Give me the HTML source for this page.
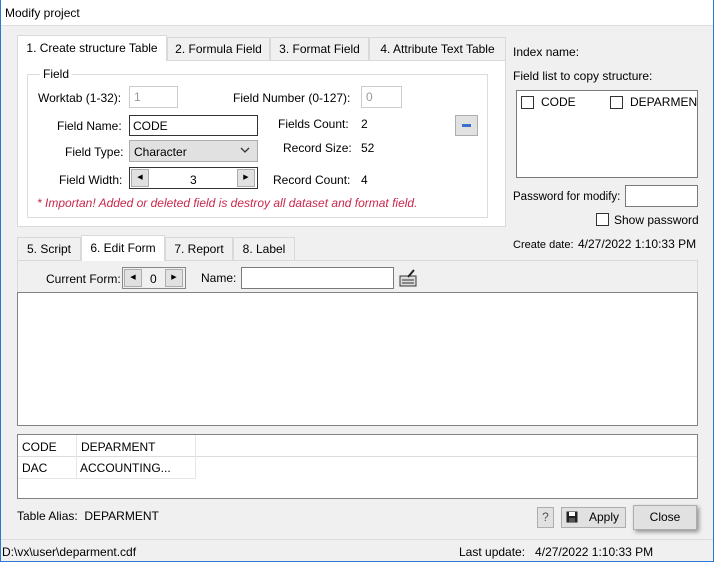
<!DOCTYPE html>
<html><head><style>
*{box-sizing:border-box;margin:0;padding:0}
body{width:714px;height:562px;position:relative;background:#f0f0f0;font-family:"Liberation Sans",sans-serif;font-size:12px;color:#000;overflow:hidden}
.a{position:absolute;white-space:nowrap}
.box{position:absolute;background:#fff;border:1px solid #7a7a7a}
.btn{position:absolute;background:#e1e1e1;border:1px solid #adadad}
.cb{position:absolute;width:13px;height:13px;border:1px solid #333;background:#fff}
.tab{position:absolute;border:1px solid #d9d9d9;border-bottom:none;background:#f0f0f0;text-align:center;line-height:24px}
.sp{position:absolute;width:18px;height:18px;background:#e1e1e1;border:1px solid #adadad;font-size:7px;text-align:center;line-height:16px}
</style></head><body>
<div class="a" style="left:0;top:0;width:714px;height:26px;background:#fff;border-bottom:1px solid #dcdcdc"></div>
<div class="a" style="left:5px;top:6px">Modify project</div>
<div class="a" style="left:0;top:0;width:1px;height:562px;background:#2b78d0"></div>
<div class="a" style="left:713px;top:0;width:1px;height:562px;background:#2b78d0"></div>

<!-- top tabs -->
<div class="a" style="left:17px;top:60px;width:489px;height:167px;background:#fff;border:1px solid #d9d9d9"></div>
<div class="tab" style="left:17px;top:35px;width:150px;height:26px;background:#fff;border-color:#d9d9d9">1. Create structure Table</div>
<div class="tab" style="left:167px;top:37px;width:103px;height:23px;line-height:22px">2. Formula Field</div>
<div class="tab" style="left:270px;top:37px;width:99px;height:23px;line-height:22px">3. Format Field</div>
<div class="tab" style="left:369px;top:37px;width:137px;height:23px;line-height:22px">4. Attribute Text Table</div>
<div class="a" style="left:27px;top:74px;width:461px;height:144px;border:1px solid #dcdcdc"></div>
<div class="a" style="left:40px;top:67px;background:#fff;padding:0 3px">Field</div>
<div class="a" style="left:38px;top:91px">Worktab (1-32):</div>
<div class="box" style="left:129px;top:86px;width:49px;height:22px;border-color:#ccc;color:#999;padding:3px 4px">1</div>
<div class="a" style="left:233px;top:91px">Field Number (0-127):</div>
<div class="box" style="left:361px;top:86px;width:41px;height:22px;border-color:#ccc;color:#999;padding:3px 4px">0</div>
<div class="a" style="left:57px;top:119px">Field Name:</div>
<div class="box" style="left:129px;top:115px;width:129px;height:21px;border-color:#333;padding:3px 3px">CODE</div>
<div class="a" style="left:278px;top:117px">Fields Count:</div>
<div class="a" style="left:361px;top:117px">2</div>
<div class="btn" style="left:455px;top:115px;width:23px;height:21px"><div class="a" style="left:6px;top:8px;width:9px;height:3px;background:#3a6fd0"></div></div>
<div class="a" style="left:65px;top:145px">Field Type:</div>
<div class="btn" style="left:129px;top:140px;width:129px;height:22px;padding:4px 4px">Character</div>
<svg class="a" style="left:240px;top:147px" width="10" height="7" viewBox="0 0 10 7"><polyline points="1,1 5,5 9,1" fill="none" stroke="#333" stroke-width="1.3"/></svg>
<div class="a" style="left:283px;top:141px">Record Size:</div>
<div class="a" style="left:361px;top:141px">52</div>
<div class="a" style="left:59px;top:173px">Field Width:</div>
<div class="box" style="left:129px;top:167px;width:129px;height:22px;border-color:#333"></div>
<div class="sp" style="left:131px;top:169px">&#9664;</div>
<div class="a" style="left:190px;top:173px">3</div>
<div class="sp" style="left:237px;top:169px">&#9654;</div>
<div class="a" style="left:273px;top:173px">Record Count:</div>
<div class="a" style="left:361px;top:173px">4</div>
<div class="a" style="left:37px;top:196px;color:#c8284a;font-style:italic">* Importan! Added or deleted field is destroy all dataset and format field.</div>

<!-- right -->
<div class="a" style="left:513px;top:45px">Index name:</div>
<div class="a" style="left:513px;top:69px">Field list to copy structure:</div>
<div class="box" style="left:516px;top:90px;width:182px;height:88px;overflow:hidden">
<div class="cb" style="left:4px;top:5px"></div><div class="a" style="left:24px;top:4px">CODE</div>
<div class="cb" style="left:93px;top:5px"></div><div class="a" style="left:113px;top:4px">DEPARMENT</div></div>
<div class="a" style="left:513px;top:191px;font-size:11.5px">Password for modify:</div>
<div class="box" style="left:625px;top:185px;width:73px;height:22px"></div>
<div class="cb" style="left:596px;top:213px"></div>
<div class="a" style="left:614px;top:213px">Show password</div>
<div class="a" style="left:513px;top:239px;font-size:11px">Create date:</div>
<div class="a" style="left:578px;top:237px">4/27/2022 1:10:33 PM</div>

<!-- bottom tabs -->
<div class="a" style="left:17px;top:260px;width:681px;height:33px;border:1px solid #d9d9d9"></div>
<div class="tab" style="left:17px;top:237px;width:64px;height:23px;line-height:22px">5. Script</div>
<div class="tab" style="left:81px;top:235px;width:84px;height:26px;background:#fff">6. Edit Form</div>
<div class="tab" style="left:165px;top:237px;width:68px;height:23px;line-height:22px">7. Report</div>
<div class="tab" style="left:233px;top:237px;width:62px;height:23px;line-height:22px">8. Label</div>
<div class="a" style="left:46px;top:272px">Current Form:</div>
<div class="a" style="left:122px;top:267px;width:64px;height:22px;border:1px solid #888"></div>
<div class="sp" style="left:124px;top:269px">&#9664;</div>
<div class="a" style="left:150px;top:272px">0</div>
<div class="sp" style="left:165px;top:269px">&#9654;</div>
<div class="a" style="left:201px;top:271px">Name:</div>
<div class="box" style="left:241px;top:267px;width:153px;height:22px"></div>
<svg class="a" style="left:399px;top:268px" width="20" height="20" viewBox="0 0 20 20"><rect x="1" y="8" width="16" height="10" fill="#ddd" stroke="#333"/><line x1="3" y1="12" x2="15" y2="12" stroke="#333"/><line x1="3" y1="15" x2="15" y2="15" stroke="#333"/><line x1="9" y1="9" x2="15" y2="2" stroke="#222" stroke-width="2"/></svg>
<div class="box" style="left:17px;top:292px;width:681px;height:134px;border-color:#828282"></div>

<!-- grid -->
<div class="box" style="left:17px;top:434px;width:681px;height:65px;border-color:#828282"></div>
<div class="a" style="left:18px;top:435px;width:679px;height:22px;border-bottom:1px solid #dcdcdc"></div>
<div class="a" style="left:76px;top:435px;width:1px;height:43px;background:#e6e6e6"></div>
<div class="a" style="left:195px;top:435px;width:1px;height:43px;background:#e6e6e6"></div>
<div class="a" style="left:18px;top:478px;width:178px;height:1px;background:#e6e6e6"></div>
<div class="a" style="left:22px;top:440px">CODE</div>
<div class="a" style="left:81px;top:440px">DEPARMENT</div>
<div class="a" style="left:22px;top:461px">DAC</div>
<div class="a" style="left:80px;top:461px">ACCOUNTING...</div>

<div class="a" style="left:17px;top:509px">Table Alias:&nbsp; DEPARMENT</div>
<div class="btn" style="left:537px;top:507px;width:17px;height:21px;text-align:center;line-height:19px;color:#555">?</div>
<div class="btn" style="left:561px;top:507px;width:65px;height:21px;line-height:19px;padding-left:27px">Apply</div>
<svg class="a" style="left:566px;top:511px" width="12" height="12" viewBox="0 0 12 12"><rect x="0.5" y="0.5" width="11" height="11" fill="#222"/><rect x="3" y="1" width="6" height="4" fill="#fff"/><rect x="3" y="7" width="6" height="4" fill="#555"/></svg>
<div class="btn" style="left:633px;top:505px;width:64px;height:25px;line-height:23px;text-align:center;box-shadow:2px 2px 4px rgba(0,0,0,.4)">Close</div>

<div class="a" style="left:1px;top:539px;width:712px;height:1px;background:#dcdcdc"></div>
<div class="a" style="left:2px;top:545px">D:\vx\user\deparment.cdf</div>
<div class="a" style="left:459px;top:545px">Last update:&nbsp;&nbsp; 4/27/2022 1:10:33 PM</div>
<div class="a" style="left:0;top:561px;width:714px;height:1px;background:#2b78d0"></div>
</body></html>
